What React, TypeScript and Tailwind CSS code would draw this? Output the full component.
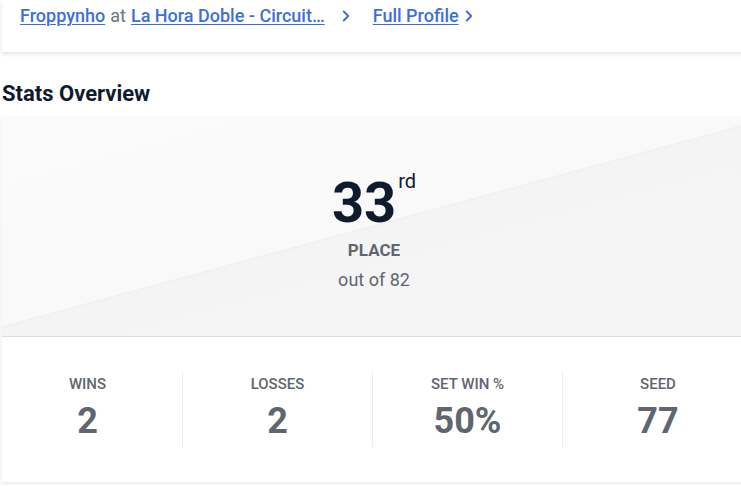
import { ChevronRight } from 'lucide-react';

const STATS = [
  { label: 'Wins', value: '2' },
  { label: 'Losses', value: '2' },
  { label: 'Set Win %', value: '50%' },
  { label: 'Seed', value: '77' },
];

export default function App() {
  return (
    <div className="w-[741px] h-[486px] overflow-hidden bg-white font-['Roboto',sans-serif]">
      <div className="w-[790px] pl-[2px]">
        {/* Top links card */}
        <div className="bg-white shadow-[0_2px_4px_rgba(0,0,0,0.12)] pt-[5px] pb-[25px] pl-[18px] flex items-center text-[18px] leading-[22px] font-medium">
          <a className="text-[#3d6fdb] underline underline-offset-2 decoration-1" href="#">
            Froppynho
          </a>
          <span className="text-[#6b7280] font-normal ml-[5px]">at</span>
          <a className="text-[#3d6fdb] underline underline-offset-2 decoration-1 ml-[5px]" href="#">
            La Hora Doble - Circuit…
          </a>
          <ChevronRight className="ml-[12px] w-[18px] h-[18px] text-[#3d6fdb]" strokeWidth={2.5} />
          <a className="ml-[18px] text-[#3d6fdb] underline underline-offset-2 decoration-1" href="#">
            Full Profile
          </a>
          <ChevronRight className="ml-[1px] w-[18px] h-[18px] text-[#3d6fdb]" strokeWidth={2.5} />
        </div>

        <h2 className="mt-[29px] text-[22px] leading-[26px] font-bold text-[#0f1b2d]">Stats Overview</h2>

        {/* Stats card */}
        <div className="mt-[11px] bg-white shadow-[0_1px_4px_rgba(0,0,0,0.12)]">
          <div className="h-[219px] border-b border-[#dcdcdc] bg-[linear-gradient(164.8deg,#fbfbfb_0%,#f9f9f9_48.1%,#efefef_48.3%,#f4f4f4_48.7%,#f6f6f6_100%)] flex flex-col items-center pt-[55px] pr-[44px]">
            <div className="flex items-start text-[#0f1b2d]">
              <span className="text-[56px] leading-[60px] font-bold">33</span>
              <span className="text-[20px] leading-[20px] font-normal mt-[-2px] ml-[2px]">rd</span>
            </div>
            <div className="mt-[7px] text-[17px] leading-[20px] font-bold text-[#5f6670]">PLACE</div>
            <div className="mt-[9px] text-[18px] leading-[22px] text-[#5f6670]">out of 82</div>
          </div>
          <div className="h-[145px] grid grid-cols-[181px_190px_190px_190px] items-center">
            {STATS.map((s, i) => (
              <div
                key={s.label}
                className={
                  'flex flex-col items-center h-[75px] ' +
                  (i === 0 ? 'pr-[9px] ' : '') +
                  (i < 3 ? 'border-r border-[#ececec]' : '')
                }
              >
                <div className="text-[15px] leading-[18px] font-medium uppercase text-[#5f6670] mt-[3px]">{s.label}</div>
                <div className="text-[36px] leading-[40px] font-bold text-[#5f6670] mt-[8px]">{s.value}</div>
              </div>
            ))}
          </div>
        </div>
      </div>
    </div>
  );
}
